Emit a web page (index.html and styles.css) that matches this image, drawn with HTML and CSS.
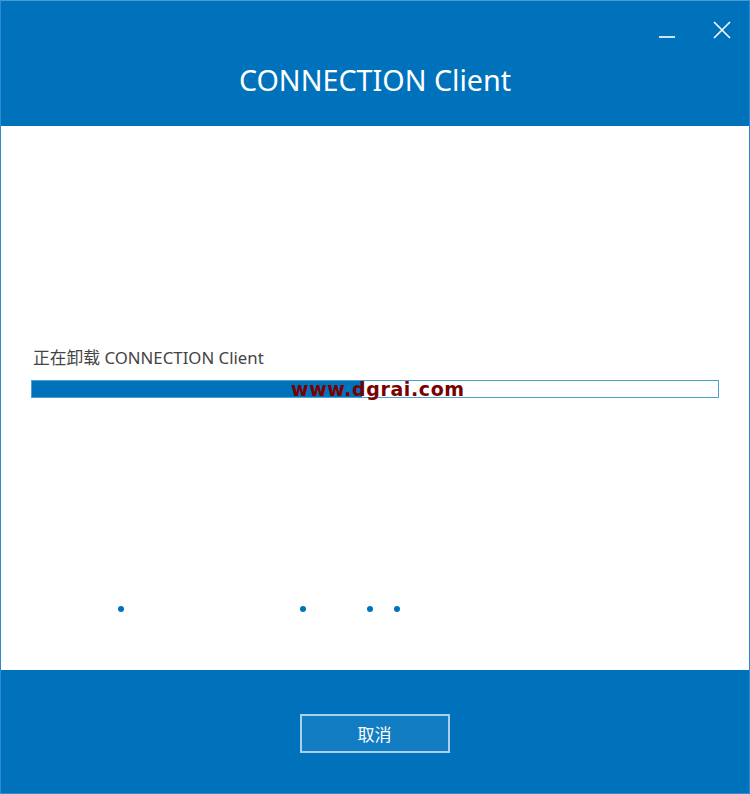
FILE: index.html
```html
<!DOCTYPE html>
<html>
<head>
<meta charset="utf-8">
<link rel="stylesheet" href="styles.css">
</head>
<body>
<div class="window">
  <header class="header">
    <div class="controls">
      <svg class="ctl" width="20" height="20" viewBox="0 0 20 20"><line x1="1" y1="17" x2="17" y2="17" stroke="#fff" stroke-width="1.6"/></svg>
      <svg class="ctl" width="20" height="20" viewBox="0 0 20 20"><path d="M2 2 L18 18 M18 2 L2 18" stroke="#fff" stroke-width="1.6" fill="none"/></svg>
    </div>
    <h1 class="title">CONNECTION Client</h1>
  </header>
  <main class="content">
    <div class="label">正在卸载 CONNECTION Client</div>
    <div class="progress">
      <div class="fill" style="width:330px"></div>
      <span class="watermark">www.dgrai.com</span>
    </div>
    <div class="dots">
      <span class="dot d1"></span>
      <span class="dot d2"></span>
      <span class="dot d3"></span>
      <span class="dot d4"></span>
    </div>
  </main>
  <footer class="footer">
    <button class="cancel">取消</button>
  </footer>
</div>
</body>
</html>
```
FILE: styles.css
```css
html, body {
  margin: 0;
  padding: 0;
}
body {
  font-family: "Noto Sans", "Noto Sans CJK SC", sans-serif;
  background: #fff;
}
.window {
  width: 750px;
  height: 794px;
  box-sizing: border-box;
  border: 1px solid #2e8bd0;
  border-top-color: #4a9ad6;
  display: flex;
  flex-direction: column;
  background: #fff;
}
.header {
  position: relative;
  height: 125px;
  background: #0072bc;
  display: flex;
  align-items: center;
  justify-content: center;
  flex: none;
}
.title {
  margin: 0;
  margin-top: 32px;
  font-weight: 400;
  font-size: 28.7px;
  color: #fff;
  letter-spacing: 0;
}
.controls {
  position: absolute;
  top: 19px;
  right: 17px;
  display: flex;
  gap: 34px;
}
.content {
  flex: 1;
  padding: 221px 30px 0 30px;
  display: flex;
  flex-direction: column;
}
.label {
  font-size: 16.8px;
  line-height: 22px;
  color: #444;
  padding-left: 2px;
  letter-spacing: 0;
}
.progress {
  position: relative;
  margin-top: 11px;
  height: 18px;
  box-sizing: border-box;
  border: 1px solid #4e9fd6;
  background: #fff;
}
.fill {
  height: 100%;
  background: #0072bc;
}
.watermark {
  position: absolute;
  left: 259px;
  top: -3px;
  font-family: "DejaVu Sans", sans-serif;
  font-weight: 700;
  font-size: 19px;
  line-height: 22px;
  color: #7a0000;
  letter-spacing: 0.6px;
}
.dots {
  display: flex;
  margin-top: 208px;
}
.dot {
  width: 6px;
  height: 6px;
  border-radius: 50%;
  background: #0072bc;
}
.d1 { margin-left: 87px; }
.d2 { margin-left: 176px; }
.d3 { margin-left: 61px; }
.d4 { margin-left: 21px; }
.footer {
  height: 123px;
  flex: none;
  background: #0072bc;
  display: flex;
  justify-content: center;
  padding-top: 44px;
  box-sizing: border-box;
}
.cancel {
  width: 150px;
  height: 39px;
  margin-left: -1px;
  box-sizing: border-box;
  border: 2px solid #a9d0ec;
  background: #127dc2;
  color: #fff;
  font-family: "Noto Sans CJK SC", sans-serif;
  font-size: 17px;
  padding: 0;
}
```
